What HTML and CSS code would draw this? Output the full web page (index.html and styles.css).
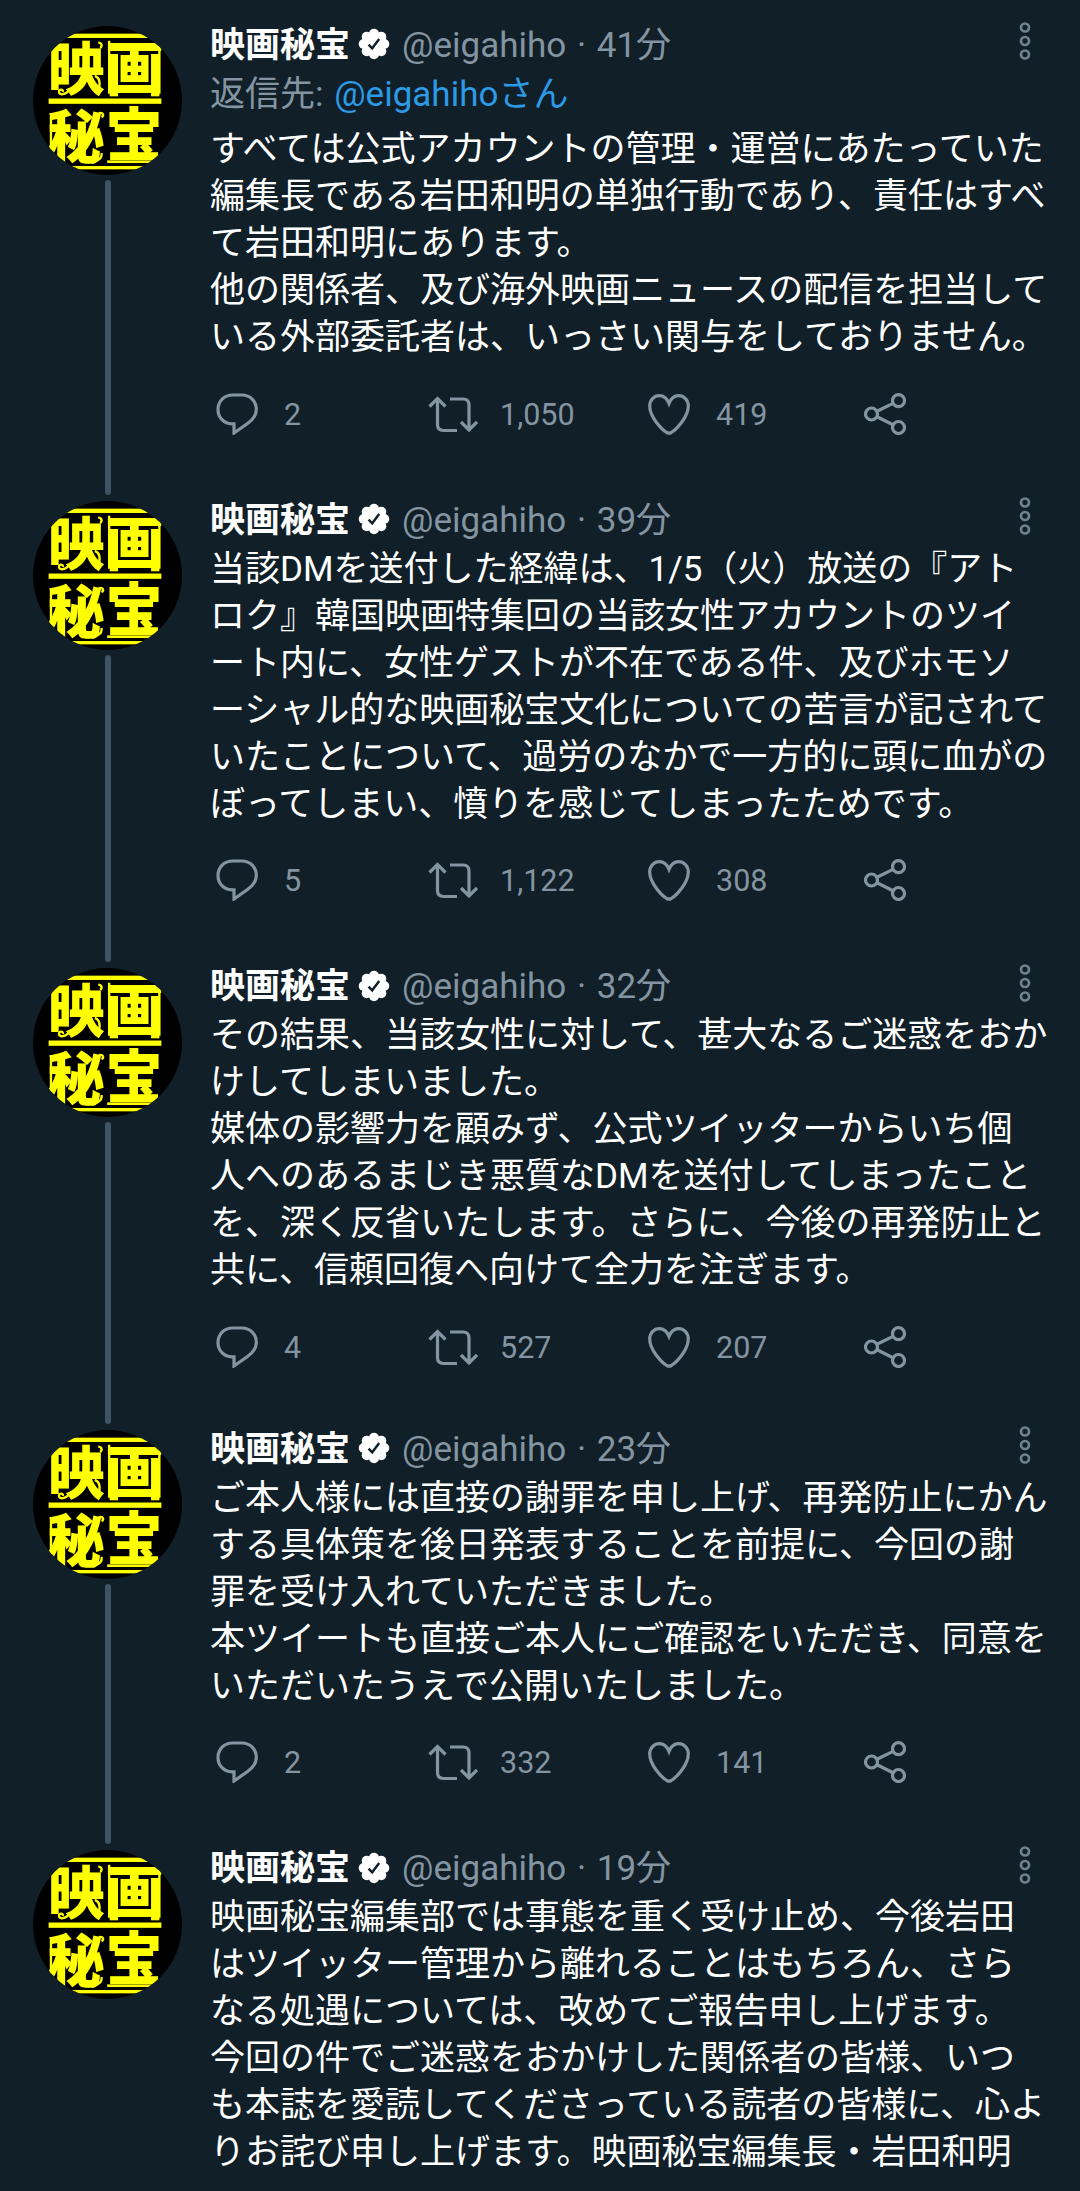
FILE: index.html
```html
<!DOCTYPE html>
<html lang="ja">
<head>
    <meta charset="UTF-8">
    <meta name="viewport" content="width=device-width, initial-scale=1.0">
    <title>映画秘宝</title>
    <link rel="stylesheet" href="styles.css">
</head>
<body>
    <!-- Общие иконки -->
    <svg class="sprite" xmlns="http://www.w3.org/2000/svg">
        <defs>
            <clipPath id="round"><circle cx="224" cy="224" r="224"/></clipPath>
        </defs>
        <symbol id="logo" viewBox="0 0 448 448">
            <g clip-path="url(#round)">
                <rect width="448" height="448" fill="#000"/>
                <g fill="#ff0">
                    <rect x="47" y="23" width="339" height="13"/>
                    <rect x="47" y="218" width="339" height="16"/>
                    <rect x="223" y="404" width="163" height="8"/>
                    <rect x="47" y="421" width="339" height="10"/>
                    <g class="logo-text">
                        <text x="45" y="192" textLength="170" lengthAdjust="spacingAndGlyphs">映</text>
                        <text x="217" y="192" textLength="176" lengthAdjust="spacingAndGlyphs">画</text>
                        <text x="45" y="396" textLength="170" lengthAdjust="spacingAndGlyphs">秘</text>
                        <text x="219" y="390" textLength="170" lengthAdjust="spacingAndGlyphs">宝</text>
                    </g>
                </g>
                <!-- завитки логотипа -->
                <g fill="none" stroke="#ff0" stroke-width="7">
                    <path d="M112 188c-14 22-34 20-34 10s14-8 12 0"/>
                    <path d="M196 50c10 0 14 10 6 16M186 150q22 8 10 48"/>
                    <path d="M198 262c14-4 16 8 8 12M160 402c24 14 50-2 46-20"/>
                    <path d="M54 262v140M380 44v160M229 44v160"/>
                </g>
            </g>
        </symbol>
        <symbol id="badge" viewBox="0 0 32 32">
            <g fill="#fff">
                <circle cx="16" cy="16" r="12"/>
                <circle cx="16" cy="5.7" r="5"/><circle cx="23.3" cy="8.7" r="5"/>
                <circle cx="26.3" cy="16" r="5"/><circle cx="23.3" cy="23.3" r="5"/>
                <circle cx="16" cy="26.3" r="5"/><circle cx="8.7" cy="23.3" r="5"/>
                <circle cx="5.7" cy="16" r="5"/><circle cx="8.7" cy="8.7" r="5"/>
            </g>
            <path d="M10.6 16.6l3.6 3.7 7-9.2" fill="none" stroke="#101f28" stroke-width="2.4"/>
        </symbol>
        <symbol id="dots" viewBox="0 0 12 40">
            <g fill="none" stroke="#6f8291" stroke-width="2.7">
                <circle cx="6" cy="6.5" r="4"/><circle cx="6" cy="20" r="4"/><circle cx="6" cy="33.5" r="4"/>
            </g>
        </symbol>
        <symbol id="reply" viewBox="0 0 42 42">
            <path d="M16.5 2h9.5c8.2 0 14.3 6.3 14.3 14.2 0 6.2-3.2 10.4-8.8 14.3L18 40v-9.2h-2C8 30.8 2 24.5 2 16.4 2 8.2 8.2 2 16.5 2z"/>
        </symbol>
        <symbol id="retweet" viewBox="0 0 50 42">
            <path d="M1.5 13.500l8-8 8 8M9.500 6.500v25q0 6 6 6h13.500M22 6h13q6 0 6 6v25M33 29l8 8 8-8"/>
        </symbol>
        <symbol id="heart" viewBox="0 0 42 42">
            <path d="M21 10.500C19 5.500 15.500 2.700 11.500 2.700 6 2.700 1.700 7 1.700 13c0 11 12 23.500 17 26.500q2.300 1.300 4.600 0c5-3 17-15.500 17-26.500 0-6-4.300-10.300-9.800-10.300-4 0-7.500 2.800-9.500 7.800z"/>
        </symbol>
        <symbol id="share" viewBox="0 0 42 42">
            <circle cx="7.5" cy="21" r="6"/><circle cx="34.5" cy="7.7" r="6"/><circle cx="34.5" cy="34.5" r="6"/>
            <path d="M13 18.2l16-7.8M13 23.8l16 8"/>
        </symbol>
    </svg>

    <div class="thread">
        <article class="tweet">
            <div class="side">
                <svg class="avatar"><use href="#logo"/></svg>
                <div class="line"></div>
            </div>
            <div class="content">
                <div class="header">
                    <span class="name">映画秘宝</span>
                    <svg class="badge"><use href="#badge"/></svg>
                    <span class="meta">@eigahiho · 41分</span>
                    <svg class="dots"><use href="#dots"/></svg>
                </div>
                <div class="reply-to">返信先: <span class="link">@eigahihoさん</span></div>
                <p class="text">すべては公式アカウントの管理・運営にあたっていた<br>編集長である岩田和明の単独行動であり、責任はすべ<br>て岩田和明にあります。<br>他の関係者、及び海外映画ニュースの配信を担当して<br>いる外部委託者は、いっさい関与をしておりません。</p>
                <div class="actions">
                    <span class="action"><svg class="icon"><use href="#reply"/></svg>2</span>
                    <span class="action retweet"><svg class="icon"><use href="#retweet"/></svg>1,050</span>
                    <span class="action"><svg class="icon"><use href="#heart"/></svg>419</span>
                    <span class="action"><svg class="icon"><use href="#share"/></svg></span>
                </div>
            </div>
        </article>

        <article class="tweet">
            <div class="side">
                <svg class="avatar"><use href="#logo"/></svg>
                <div class="line"></div>
            </div>
            <div class="content">
                <div class="header">
                    <span class="name">映画秘宝</span>
                    <svg class="badge"><use href="#badge"/></svg>
                    <span class="meta">@eigahiho · 39分</span>
                    <svg class="dots"><use href="#dots"/></svg>
                </div>
                <p class="text">当該DMを送付した経緯は、1/5（火）放送の『アト<br>ロク』韓国映画特集回の当該女性アカウントのツイ<br>ート内に、女性ゲストが不在である件、及びホモソ<br>ーシャル的な映画秘宝文化についての苦言が記されて<br>いたことについて、過労のなかで一方的に頭に血がの<br>ぼってしまい、憤りを感じてしまったためです。</p>
                <div class="actions">
                    <span class="action"><svg class="icon"><use href="#reply"/></svg>5</span>
                    <span class="action retweet"><svg class="icon"><use href="#retweet"/></svg>1,122</span>
                    <span class="action"><svg class="icon"><use href="#heart"/></svg>308</span>
                    <span class="action"><svg class="icon"><use href="#share"/></svg></span>
                </div>
            </div>
        </article>

        <article class="tweet tight">
            <div class="side">
                <svg class="avatar"><use href="#logo"/></svg>
                <div class="line"></div>
            </div>
            <div class="content">
                <div class="header">
                    <span class="name">映画秘宝</span>
                    <svg class="badge"><use href="#badge"/></svg>
                    <span class="meta">@eigahiho · 32分</span>
                    <svg class="dots"><use href="#dots"/></svg>
                </div>
                <p class="text">その結果、当該女性に対して、甚大なるご迷惑をおか<br>けしてしまいました。<br>媒体の影響力を顧みず、公式ツイッターからいち個<br>人へのあるまじき悪質なDMを送付してしまったこと<br>を、深く反省いたします。さらに、今後の再発防止と<br>共に、信頼回復へ向けて全力を注ぎます。</p>
                <div class="actions">
                    <span class="action"><svg class="icon"><use href="#reply"/></svg>4</span>
                    <span class="action retweet"><svg class="icon"><use href="#retweet"/></svg>527</span>
                    <span class="action"><svg class="icon"><use href="#heart"/></svg>207</span>
                    <span class="action"><svg class="icon"><use href="#share"/></svg></span>
                </div>
            </div>
        </article>

        <article class="tweet">
            <div class="side">
                <svg class="avatar"><use href="#logo"/></svg>
                <div class="line"></div>
            </div>
            <div class="content">
                <div class="header">
                    <span class="name">映画秘宝</span>
                    <svg class="badge"><use href="#badge"/></svg>
                    <span class="meta">@eigahiho · 23分</span>
                    <svg class="dots"><use href="#dots"/></svg>
                </div>
                <p class="text">ご本人様には直接の謝罪を申し上げ、再発防止にかん<br>する具体策を後日発表することを前提に、今回の謝<br>罪を受け入れていただきました。<br>本ツイートも直接ご本人にご確認をいただき、同意を<br>いただいたうえで公開いたしました。</p>
                <div class="actions">
                    <span class="action"><svg class="icon"><use href="#reply"/></svg>2</span>
                    <span class="action retweet"><svg class="icon"><use href="#retweet"/></svg>332</span>
                    <span class="action"><svg class="icon"><use href="#heart"/></svg>141</span>
                    <span class="action"><svg class="icon"><use href="#share"/></svg></span>
                </div>
            </div>
        </article>

        <article class="tweet">
            <div class="side">
                <svg class="avatar"><use href="#logo"/></svg>
            </div>
            <div class="content">
                <div class="header">
                    <span class="name">映画秘宝</span>
                    <svg class="badge"><use href="#badge"/></svg>
                    <span class="meta">@eigahiho · 19分</span>
                    <svg class="dots"><use href="#dots"/></svg>
                </div>
                <p class="text">映画秘宝編集部では事態を重く受け止め、今後岩田<br>はツイッター管理から離れることはもちろん、さら<br>なる処遇については、改めてご報告申し上げます。<br>今回の件でご迷惑をおかけした関係者の皆様、いつ<br>も本誌を愛読してくださっている読者の皆様に、心よ<br>りお詫び申し上げます。映画秘宝編集長・岩田和明</p>
            </div>
        </article>
    </div>
</body>
</html>
```
FILE: styles.css
```css
body {
    margin: 0;
    height: 2191px;
    overflow: hidden;
    background-color: #101f28;
    color: #fff;
    font-family: Roboto, "Noto Sans CJK JP", sans-serif;
    font-size: 35px;
    line-height: 47px;
}
.sprite {
    display: block;
    width: 0;
    height: 0;
}
.logo-text {
    font-family: "Noto Sans CJK JP", sans-serif;
    font-size: 176px;
    font-weight: 900;
}
.thread {
    padding: 26px 0 0 33px;
}
.tweet {
    display: flex;
    gap: 28px;
}
.side {
    display: flex;
    flex-direction: column;
    align-items: center;
    width: 149px;
}
.avatar {
    display: block;
    width: 149px;
    height: 149px;
}
.line {
    flex: 1;
    width: 6px;
    margin: 5px 0 6px;
    border-radius: 3px;
    background-color: #3d5466;
}
.content {
    width: 842px;
    margin-top: -4.5px;
    padding-bottom: 66.5px;
    white-space: nowrap;
}
.tight .content {
    padding-bottom: 62.5px;
}
.header {
    display: flex;
    align-items: center;
    height: 47px;
}
.name {
    font-weight: bold;
}
.badge {
    width: 32px;
    height: 32px;
    margin: -2px 12px 0 8px;
}
.meta, .reply-to {
    color: #8495a1;
    word-spacing: 2px;
}
.dots {
    width: 12px;
    height: 40px;
    margin: -8px 21px 0 auto;
}
.reply-to {
    margin: 2px 0 8.5px;
}
.link {
    color: #2c9ae4;
}
.text {
    margin: 2px 0 31.5px;
    line-height: 47px;
}
.actions {
    display: flex;
    height: 42px;
    padding-left: 6px;
    color: #8495a1;
    font-size: 30.5px;
    line-height: 43px;
}
.action {
    display: flex;
    flex: none;
    gap: 26px;
    width: 216px;
}
.action:first-child {
    width: 212px;
}
.action:last-child {
    width: 42px;
}
.action.retweet {
    width: 220px;
    gap: 22px;
}
.icon {
    width: 42px;
    height: 42px;
    fill: none;
    stroke: #8495a1;
    stroke-width: 3.2px;
}
.retweet .icon {
    width: 50px;
}
```
